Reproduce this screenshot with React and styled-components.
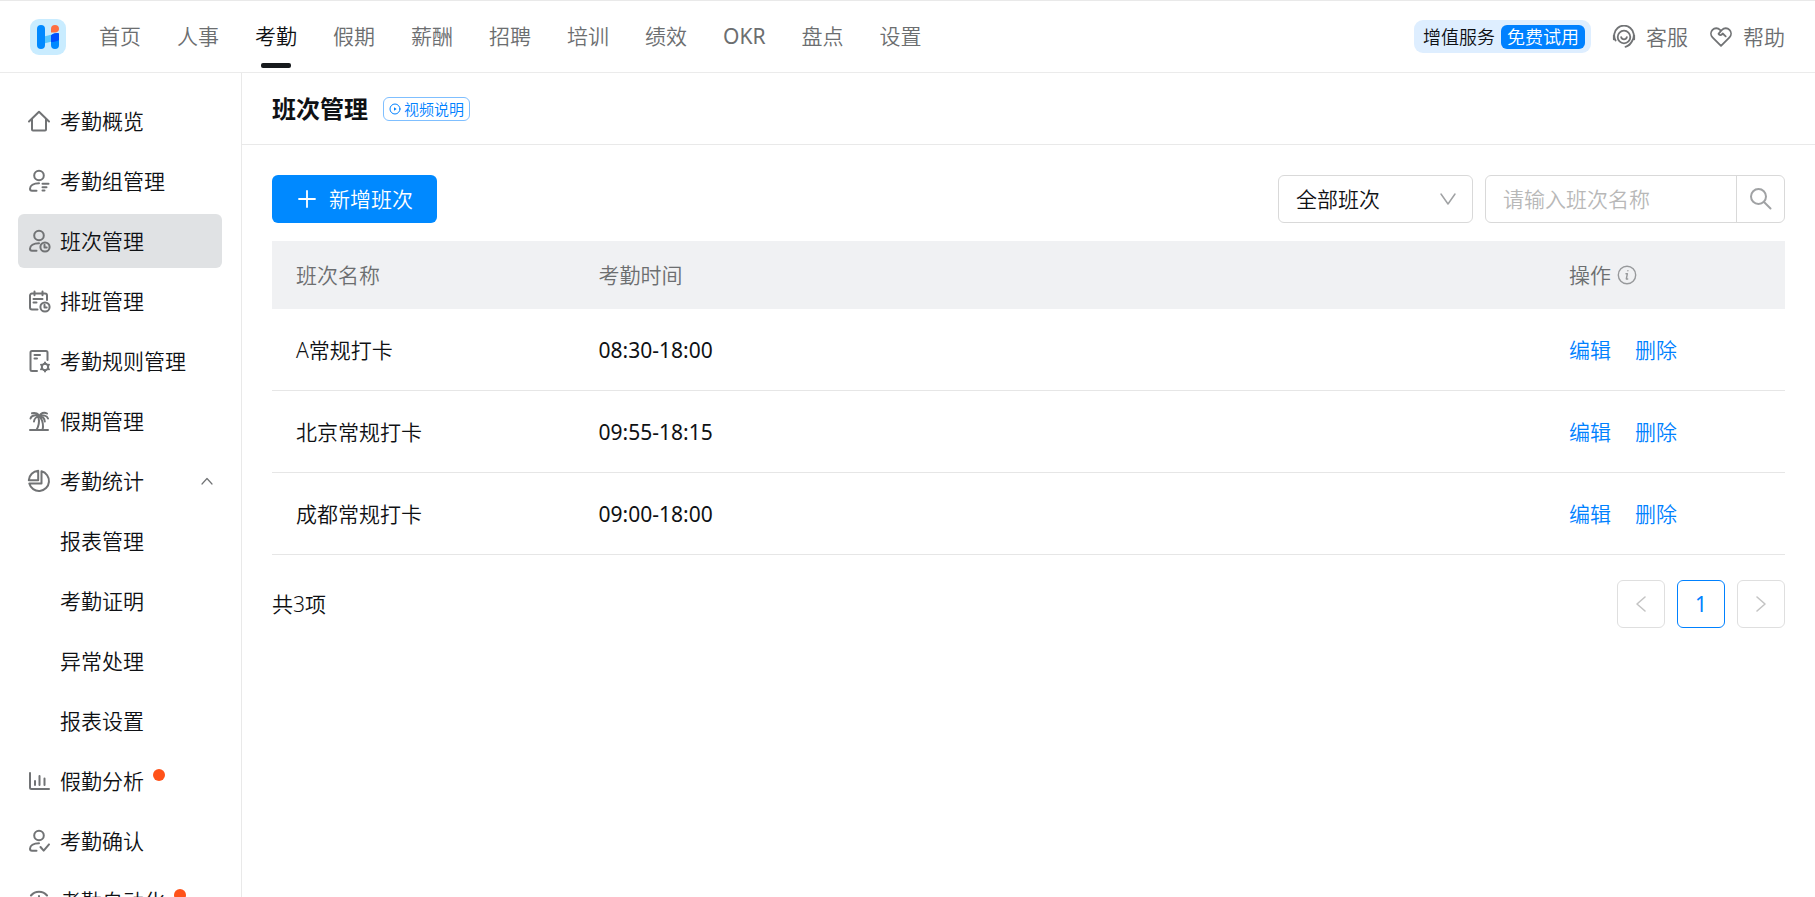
import { useState } from "react";
import styled, { createGlobalStyle } from "styled-components";

const GlobalStyle = createGlobalStyle`
    * {
        box-sizing: border-box;
    }

    body {
        margin: 0;
        background-color: #fff;
        color: #0f1114;
        font-family: "Noto Sans", "Noto Sans CJK SC", sans-serif;
        font-size: 21px;
        line-height: 30px;
        font-weight: 350;
    }

    button, input, select {
        font: inherit;
        color: inherit;
    }

    a {
        color: inherit;
        text-decoration: none;
    }
`;

const Page = styled.div`
    display: flex;
    flex-direction: column;
    height: 100vh;
    overflow: hidden;
`;

const Header = styled.header`
    display: flex;
    align-items: center;
    flex: none;
    height: 73px;
    padding: 0 30px;
    border-top: 1px solid #e9e9e9;
    border-bottom: 1px solid #ebebeb;
`;

const Logo = styled.svg`
    flex: none;
    width: 36px;
    height: 36px;
    margin-right: 33px;
`;

const Nav = styled.nav`
    display: flex;
    flex: 1;
    gap: 36px;
    margin-bottom: 2px;
`;

const NavLink = styled.a`
    position: relative;
    color: ${ ( { $active } ) => $active ? "#0f1114" : "#6c6e70" };
    font-weight: ${ ( { $latin } ) => $latin ? 400 : "inherit" };

    &::after {
        content: "";
        display: ${ ( { $active } ) => $active ? "block" : "none" };
        position: absolute;
        left: 50%;
        bottom: -17px;
        width: 30px;
        height: 5px;
        margin-left: -15px;
        border-radius: 2px;
        background-color: #171a1d;
    }
`;

const Tools = styled.div`
    display: flex;
    align-items: center;
    gap: 21px;
`;

const Promo = styled.a`
    display: flex;
    align-items: center;
    gap: 6px;
    height: 33px;
    padding: 0 6px 0 9px;
    border-radius: 9px;
    background-color: #deeeff;
    font-size: 18px;
`;

const PromoTag = styled.span`
    padding: 0 6px;
    border-radius: 6px;
    background-color: #0081ff;
    color: #fff;
    line-height: 24px;
`;

const ToolLink = styled.a`
    display: flex;
    align-items: center;
    gap: 10px;
    color: #6c6e70;
`;

const Body = styled.div`
    display: flex;
    flex: 1;
    min-height: 0;
`;

const Sidebar = styled.aside`
    display: flex;
    flex-direction: column;
    flex: none;
    gap: 6px;
    width: 242px;
    padding: 21px 19px 0 18px;
    border-right: 1px solid #e9e9e9;
    overflow: hidden;
`;

const MenuItem = styled.a`
    display: flex;
    align-items: center;
    flex: none;
    gap: 9px;
    height: 54px;
    padding: 0 9px 0 ${ ( { $child } ) => $child ? "42px" : "9px" };
    border-radius: 6px;
    background-color: ${ ( { $active } ) => $active ? "#e0e2e4" : "transparent" };
`;

const Dot = styled.span`
    width: 12px;
    height: 12px;
    margin-bottom: 12px;
    border-radius: 50%;
    background-color: #ff5219;
`;

const Icon = styled.svg`
    flex: none;
    width: ${ ( { $size } ) => $size || 24 }px;
    height: ${ ( { $size } ) => $size || 24 }px;
    fill: none;
    stroke: ${ ( { $color } ) => $color || "#717375" };
    stroke-width: ${ ( { $weight } ) => $weight || 2 };
    stroke-linecap: round;
    stroke-linejoin: round;
`;

const Arrow = styled( Icon )`
    margin-left: auto;
`;

const Main = styled.main`
    flex: 1;
    min-width: 0;
`;

const TitleBar = styled.div`
    display: flex;
    align-items: center;
    gap: 15px;
    height: 72px;
    padding: 0 30px;
    border-bottom: 1px solid #e9e9e9;
`;

const Title = styled.h1`
    margin: 0;
    font-size: 24px;
    font-weight: 700;
`;

const VideoLink = styled.a`
    display: flex;
    align-items: center;
    gap: 3px;
    height: 24px;
    padding: 0 5px;
    border: 1px solid #7fbfff;
    border-radius: 6px;
    color: #0081ff;
    font-size: 15px;
`;

const Content = styled.div`
    padding: 30px;
`;

const Toolbar = styled.div`
    display: flex;
    gap: 12px;
    margin-bottom: 18px;
`;

const AddButton = styled.button`
    display: flex;
    align-items: center;
    gap: 11px;
    height: 48px;
    margin-right: auto;
    padding: 0 24px;
    border: none;
    border-radius: 6px;
    background-color: #0089ff;
    color: #fff;
    cursor: pointer;
`;

const SelectBox = styled.div`
    display: grid;
    align-items: center;
    width: 195px;

    & > * {
        grid-area: 1 / 1;
    }

    & > svg {
        justify-self: end;
        margin-right: 16px;
        pointer-events: none;
    }
`;

const Select = styled.select`
    width: 100%;
    height: 48px;
    padding: 0 17px;
    appearance: none;
    border: 1px solid #d9d9d9;
    border-radius: 6px;
    background-color: #fff;
`;

const SearchBox = styled.form`
    display: flex;
    width: 300px;
    height: 48px;
    border: 1px solid #d9d9d9;
    border-radius: 6px;
`;

const SearchInput = styled.input`
    flex: 1;
    min-width: 0;
    padding: 0 17px;
    border: none;
    background: none;

    &::placeholder {
        color: #b8b8b8;
    }
`;

const SearchButton = styled.button`
    display: flex;
    align-items: center;
    justify-content: center;
    width: 48px;
    padding: 0;
    border: none;
    border-left: 1px solid #d9d9d9;
    background: none;
    cursor: pointer;
`;

const Table = styled.table`
    width: 100%;
    table-layout: fixed;
    border-collapse: separate;
    border-spacing: 0;
`;

const Th = styled.th`
    width: ${ ( { $width } ) => $width || "auto" };
    height: 68px;
    padding: 0 24px;
    background-color: #f0f1f3;
    color: #6c6e70;
    font-weight: inherit;
    text-align: left;
`;

const Td = styled.td`
    height: 82px;
    padding: 0 24px;
    border-bottom: 1px solid #e6e6e6;
`;

const TimeTd = styled( Td )`
    font-weight: 400;
`;

const HeadLabel = styled.span`
    display: flex;
    align-items: center;
    gap: 6px;
`;

const Actions = styled.div`
    display: flex;
    gap: 24px;
    color: #0081ff;
`;

const Footer = styled.div`
    display: flex;
    align-items: center;
    justify-content: space-between;
    margin-top: 25px;
`;

const Pagination = styled.div`
    display: flex;
    gap: 12px;
`;

const PageButton = styled.button`
    display: flex;
    align-items: center;
    justify-content: center;
    width: 48px;
    height: 48px;
    padding: 0;
    border: 1px solid ${ ( { $active } ) => $active ? "#0081ff" : "#dfdfdf" };
    border-radius: 6px;
    background-color: #fff;
    color: #0081ff;
    font-weight: 400;
`;

const person = (
    <>
        <circle cx="12" cy="6.5" r="4.8" />
        <path d="M12 14.3C6.5 14.3 3 16.6 3 19.8c0 1.4.6 2 2 2h4.5" />
    </>
);

const clock = (
    <>
        <circle cx="18" cy="18" r="4.6" />
        <path d="M17.5 15.8v2.6h2.2" />
    </>
);

const icons = {
    home: <path d="M2 12.5 12 2.8l10 9.7M5 10v10.5c0 .7.3 1 1 1h12c.7 0 1-.3 1-1V10" />,
    group: <>{ person }<path d="M15.5 14.8h6M15.5 18.2h4M15.5 21.6h2" /></>,
    shift: <>{ person }{ clock }</>,
    calendar: (
        <>
            <path d="M10.500 20.500H5a2 2 0 0 1-2-2V6.500a2 2 0 0 1 2-2h13a2 2 0 0 1 2 2V11M7.500 2.500v3.800M15.500 2.500v3.800M6.500 10h9M6.500 13.500h3" />
            { clock }
        </>
    ),
    rules: (
        <>
            <path d="M10 22H5a1.500 1.500 0 0 1-1.500-1.500v-17A1.500 1.500 0 0 1 5 2h14a1.500 1.500 0 0 1 1.500 1.500V11M7.500 6h5.500M7.500 9.500h2.500" />
            <circle cx="18" cy="18" r="3.2" />
            <path d="M18 13.400v1.400M18 21.200v1.400M14 15.700l1.200.7M20.800 19.600l1.200.7M14 20.300l1.200-.7M20.800 16.400l1.200-.7" />
        </>
    ),
    palm: (
        <path d="M3 21h18M12.500 7.500C11.500 5 8.500 3 5 4.300M12.500 7.500C9 5.500 4.500 6 3.500 9.500M12.500 7.500C9.500 7.500 7.200 9.500 7 12.500M12.500 7.500C13.500 4 17 2.800 20 4.500M12.500 7.500C16 5.500 20 6.500 21 9.500M12.500 7.500c3 0 5 1.800 5.300 5M11.500 8.500c1 4 .5 8-2 12.500M13.500 8.500c2.500 4 3 8.500 2 12.500" />
    ),
    pie: (
        <>
            <path d="M14.500 2.300A10 10 0 1 1 2.300 14.500H14.500z" />
            <path d="M11.200 1.800v9.400H1.800a10 10 0 0 1 9.400-9.400z" />
        </>
    ),
    chart: <path d="M3 4v14.500a1.500 1.500 0 0 0 1.500 1.500H22M8 12v4M12.500 7v9M17.500 9.500v6.500" />,
    confirm: <>{ person }<path d="m13.500 18 3.200 3.600 5.300-6.200" /></>,
    auto: <path d="M4 6.500a10.500 10.500 0 0 1 16 0M12 7v6M2.500 12a9.500 9.500 0 0 0 19 0" />,
    service: (
        <>
            <circle cx="12" cy="12" r="6.3" />
            <path d="M9.200 12.200c.8 2.800 4.800 2.800 5.600 0M3.600 15.500a9.800 9.800 0 1 1 16.800 0c-1.500 3.200-3.700 5.400-6.900 6.300M1.800 10.300v4M22.200 10.300v4" />
        </>
    ),
    help: (
        <path d="M12 20.800 3.500 12.300a5.400 5.400 0 0 1 0-7.500 5.300 5.300 0 0 1 7.500 0l1 1 1-1a5.300 5.300 0 0 1 7.500 0 5.400 5.400 0 0 1 0 7.500zM12 5.800l-2.500 3c1 2 3 1.600 4.200-.3l3 2.800" />
    ),
};

const SvgIcon = ( { name, ...rest } ) => (
    <Icon viewBox="0 0 24 24" aria-hidden="true" { ...rest }>{ icons[ name ] }</Icon>
);

const navItems = [ "首页", "人事", "考勤", "假期", "薪酬", "招聘", "培训", "绩效", "OKR", "盘点", "设置" ];

const menuItems = [
    { label: "考勤概览", icon: "home" },
    { label: "考勤组管理", icon: "group" },
    { label: "班次管理", icon: "shift" },
    { label: "排班管理", icon: "calendar" },
    { label: "考勤规则管理", icon: "rules" },
    { label: "假期管理", icon: "palm" },
    { label: "考勤统计", icon: "pie", open: true },
    { label: "报表管理" },
    { label: "考勤证明" },
    { label: "异常处理" },
    { label: "报表设置" },
    { label: "假勤分析", icon: "chart", dot: true },
    { label: "考勤确认", icon: "confirm" },
    { label: "考勤自动化", icon: "auto", dot: true },
];

const shifts = [
    { name: "A常规打卡", time: "08:30-18:00" },
    { name: "北京常规打卡", time: "09:55-18:15" },
    { name: "成都常规打卡", time: "09:00-18:00" },
];

const TopBar = () => (
    <Header>
        <Logo viewBox="0 0 36 36" role="img" aria-label="logo">
            <rect width="36" height="36" rx="9" fill="#c9ecff" />
            <path d="M14 17.500 22 15.500v7l-8 2z" fill="#5cc8ff" />
            <rect x="7" y="6" width="8" height="24" rx="4" fill="#0089ff" />
            <path d="M21 16.500c2-1.800 4-2.500 6.500-2.500 1 0 1.500.5 1.500 1.500V26a4 4 0 0 1-8 0z" fill="#0089ff" />
            <path d="M21 16.500c2-1.800 4-2.500 6.500-2.500 1 0 1.500.5 1.500 1.500V21c-2.500 1.500-5 2-8 2z" fill="#0050ff" />
            <path d="M21 13.500V10a4 4 0 0 1 8 0c0 2.300-1.700 3.500-4 3.500z" fill="#ff7043" />
        </Logo>
        <Nav>
            { navItems.map( ( item ) => (
                <NavLink key={ item } href="#" $active={ item === "考勤" } $latin={ item === "OKR" }>
                    { item }
                </NavLink>
            ) ) }
        </Nav>
        <Tools>
            <Promo href="#">
                增值服务
                <PromoTag>免费试用</PromoTag>
            </Promo>
            <ToolLink href="#"><SvgIcon name="service" $weight={ 1.8 } />客服</ToolLink>
            <ToolLink href="#"><SvgIcon name="help" $weight={ 1.8 } />帮助</ToolLink>
        </Tools>
    </Header>
)

const SideMenu = () => (
    <Sidebar>
        { menuItems.map( ( item ) => (
            <MenuItem
                key={ item.label }
                href="#"
                $child={ !item.icon }
                $active={ item.label === "班次管理" }
            >
                { item.icon && <SvgIcon name={ item.icon } /> }
                { item.label }
                { item.dot && <Dot /> }
                { item.open && (
                    <Arrow viewBox="0 0 12 12" $size={ 12 } $weight={ 1.2 } aria-hidden="true">
                        <path d="m1 9 5-5.500L11 9" />
                    </Arrow>
                ) }
            </MenuItem>
        ) ) }
    </Sidebar>
)

const ShiftTable = () => (
    <Table>
        <thead>
            <tr>
                <Th $width="20%">班次名称</Th>
                <Th>考勤时间</Th>
                <Th $width="240px">
                    <HeadLabel>
                        操作
                        <Icon viewBox="0 0 20 20" $size={ 20 } $weight={ 1.4 } $color="#97999b" aria-hidden="true">
                            <circle cx="10" cy="10" r="8.7" />
                            <path d="M10.900 5.600v.1M9 8.700h1.400L9.300 14h1.400" />
                        </Icon>
                    </HeadLabel>
                </Th>
            </tr>
        </thead>
        <tbody>
            { shifts.map( ( shift ) => (
                <tr key={ shift.name }>
                    <Td>{ shift.name }</Td>
                    <TimeTd>{ shift.time }</TimeTd>
                    <Td>
                        <Actions>
                            <a href="#">编辑</a>
                            <a href="#">删除</a>
                        </Actions>
                    </Td>
                </tr>
            ) ) }
        </tbody>
    </Table>
)

const App = () => {
    const [ keyword, setKeyword ] = useState( "" );
    return (
        <Page>
            <GlobalStyle />
            <TopBar />
            <Body>
                <SideMenu />
                <Main>
                    <TitleBar>
                        <Title>班次管理</Title>
                        <VideoLink href="#">
                            <Icon viewBox="0 0 12 12" $size={ 12 } $weight={ 1 } $color="#0081ff" aria-hidden="true">
                                <circle cx="6" cy="6" r="5" />
                                <path d="M5 4.300v3.400L7.600 6z" fill="#0081ff" stroke="none" />
                            </Icon>
                            视频说明
                        </VideoLink>
                    </TitleBar>
                    <Content>
                        <Toolbar>
                            <AddButton type="button">
                                <Icon viewBox="0 0 22 22" $size={ 22 } $weight={ 1.8 } $color="#fff" aria-hidden="true">
                                    <path d="M11 3v16M3 11h16" />
                                </Icon>
                                新增班次
                            </AddButton>
                            <SelectBox>
                                <Select aria-label="班次">
                                    <option>全部班次</option>
                                </Select>
                                <Icon viewBox="0 0 18 18" $size={ 18 } $weight={ 1.5 } $color="#a0a2a4" aria-hidden="true">
                                    <path d="m2 4 7 10 7-10" />
                                </Icon>
                            </SelectBox>
                            <SearchBox onSubmit={ ( e ) => e.preventDefault() }>
                                <SearchInput
                                    aria-label="班次名称"
                                    placeholder="请输入班次名称"
                                    value={ keyword }
                                    onChange={ ( e ) => setKeyword( e.target.value ) }
                                />
                                <SearchButton type="submit" aria-label="搜索">
                                    <Icon viewBox="0 0 24 24" $color="#a0a2a4" aria-hidden="true">
                                        <circle cx="9.5" cy="9.500" r="7.5" />
                                        <path d="m15 15 6.500 6.500" />
                                    </Icon>
                                </SearchButton>
                            </SearchBox>
                        </Toolbar>
                        <ShiftTable />
                        <Footer>
                            <span>共3项</span>
                            <Pagination>
                                <PageButton type="button" aria-label="上一页" disabled>
                                    <Icon viewBox="0 0 18 18" $size={ 18 } $weight={ 1.6 } $color="#c4c4c4" aria-hidden="true">
                                        <path d="M13 2 5 9l8 7" />
                                    </Icon>
                                </PageButton>
                                <PageButton type="button" $active>1</PageButton>
                                <PageButton type="button" aria-label="下一页" disabled>
                                    <Icon viewBox="0 0 18 18" $size={ 18 } $weight={ 1.6 } $color="#c4c4c4" aria-hidden="true">
                                        <path d="m5 2 8 7-8 7" />
                                    </Icon>
                                </PageButton>
                            </Pagination>
                        </Footer>
                    </Content>
                </Main>
            </Body>
        </Page>
    )
}

export default App
